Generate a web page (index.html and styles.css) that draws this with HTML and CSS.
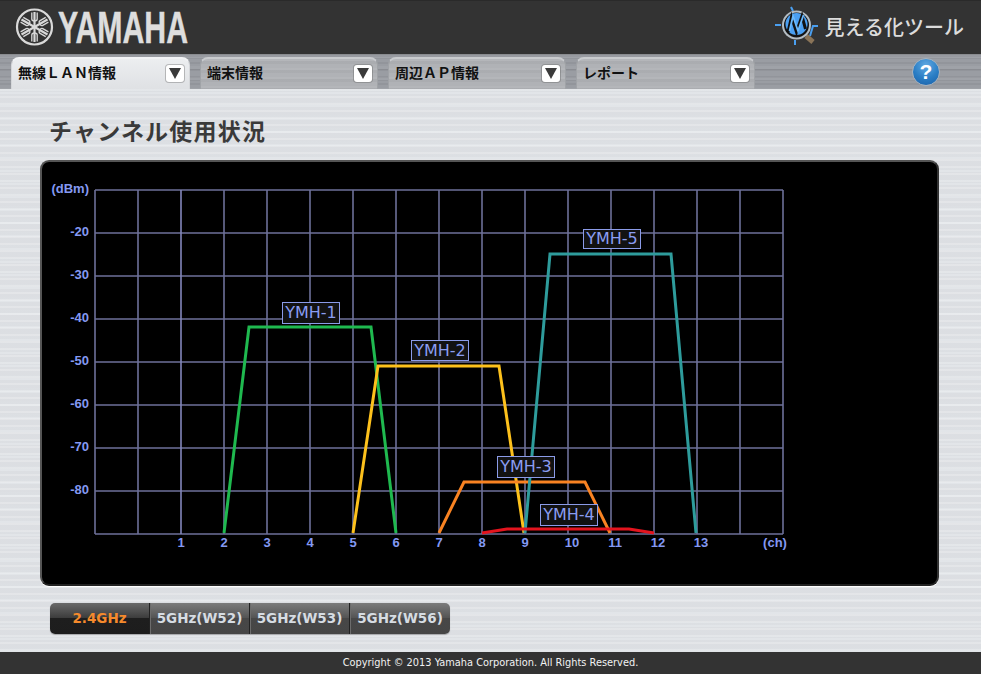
FILE: index.html
```html
<!DOCTYPE html>
<html lang="ja">
<head>
<meta charset="utf-8">
<title>チャンネル使用状況</title>
<link rel="stylesheet" href="styles.css">
</head>
<body>
<div class="page">
  <header class="header">
    <svg class="yamaha" viewBox="0 0 260 54" width="260" height="54" aria-label="YAMAHA">
      <g fill="none" stroke="#d9d9d9">
        <circle cx="34.500" cy="27" r="17.500" stroke-width="2.200"/>
        <g id="fork" stroke-width="1.300">
          <path d="M34.500 27V12" stroke-width="2.200"/>
          <path d="M31.800 12.500V19q0 2 2.700 2t2.700-2V12.500"/>
        </g>
        <g transform="rotate(60 34.500 27)"><use href="#fork"/></g>
        <g transform="rotate(120 34.500 27)"><use href="#fork"/></g>
        <g transform="rotate(180 34.500 27)"><use href="#fork"/></g>
        <g transform="rotate(240 34.500 27)"><use href="#fork"/></g>
        <g transform="rotate(300 34.500 27)"><use href="#fork"/></g>
      </g>
      <text class="yamaha-text" x="58" y="43" textLength="130" lengthAdjust="spacingAndGlyphs">YAMAHA</text>
    </svg>
    <div class="tool">
      <svg class="tool-icon" viewBox="772 4 46 46" width="46" height="46" aria-hidden="true">
        <path d="M773 25H779M808 36L811 26H816M789 7L791 11M793 40L793 45" stroke="#4a9ff0" stroke-width="2" fill="none"/>
        <path d="M804 36L811 42" stroke="#8a7458" stroke-width="5"/>
        <circle cx="794.500" cy="25" r="14.500" fill="#b4bdc4"/>
        <circle cx="794.500" cy="25" r="12.500" fill="#141414"/>
        <circle cx="794.500" cy="24" r="11" fill="#4a9ff2"/>
        <path d="M786 32L789.500 17L794.500 32L800 16L803.500 29" stroke="#111" stroke-width="3" fill="none"/>
        <path d="M787.500 31L791 16L796 31L801.500 15" stroke="#6ab8fb" stroke-width="1.800" fill="none"/>
      </svg>
      <span class="tool-name">見える化ツール</span>
    </div>
  </header>

  <nav class="nav">
    <div class="tab tab-active"><span class="tab-label">無線ＬＡＮ情報</span><span class="arrow"></span></div>
    <div class="tab"><span class="tab-label">端末情報</span><span class="arrow"></span></div>
    <div class="tab"><span class="tab-label">周辺ＡＰ情報</span><span class="arrow"></span></div>
    <div class="tab tab-wide"><span class="tab-label">レポート</span><span class="arrow"></span></div>
    <div class="help">?</div>
  </nav>

  <main class="main">
    <h1 class="title">チャンネル使用状況</h1>
    <section class="panel">
      <svg class="chart" viewBox="42 162 895 422" width="895" height="422">
        <path class="grid" d="M95 190V534M138 190V534M224 190V534M267 190V534M310 190V534M353 190V534M396 190V534M439 190V534M482 190V534M525 190V534M568 190V534M611 190V534M654 190V534M697 190V534M740 190V534M783 190V534"/>
        <path class="grid" d="M95 190H783M95 233H783M95 276H783M95 319H783M95 362H783M95 405H783M95 448H783M95 491H783M95 534H783"/>
        <path class="grid grid-hi" d="M181 190V534"/>

        <g class="axis-y">
          <text x="89" y="193">(dBm)</text>
          <text x="89" y="236">-20</text>
          <text x="89" y="279">-30</text>
          <text x="89" y="322">-40</text>
          <text x="89" y="365">-50</text>
          <text x="89" y="408">-60</text>
          <text x="89" y="451">-70</text>
          <text x="89" y="494">-80</text>
        </g>
        <g class="axis-x">
          <text x="181" y="547">1</text><text x="224" y="547">2</text><text x="267" y="547">3</text>
          <text x="310" y="547">4</text><text x="353" y="547">5</text><text x="396" y="547">6</text>
          <text x="439" y="547">7</text><text x="482" y="547">8</text><text x="525" y="547">9</text>
          <text x="572" y="547">10</text><text x="615" y="547">11</text><text x="658" y="547">12</text>
          <text x="701" y="547">13</text><text x="775" y="547">(ch)</text>
        </g>

        <polyline class="curve c1" points="224,533 249,327 371,327 396,533"/>
        <polyline class="curve c2" points="353,533 378,366 499,366 524,533"/>
        <polyline class="curve c3" points="439,533 464,482 585,482 610,533"/>
        <polyline class="curve c5" points="525,533 550,254 671,254 696,533"/>
        <polyline class="curve c4" points="482,533 507,529 629,529 654,533"/>

        <g class="ap">
          <rect x="282.500" y="302.500" width="57" height="21"/><text x="311" y="318">YMH-1</text>
          <rect x="411.500" y="340.500" width="57" height="20"/><text x="440" y="356">YMH-2</text>
          <rect x="497.500" y="456.500" width="57" height="21"/><text x="526" y="472">YMH-3</text>
          <rect x="540.500" y="504.500" width="57" height="21"/><text x="569" y="520">YMH-4</text>
          <rect x="583.500" y="229.500" width="57" height="19"/><text x="612" y="244">YMH-5</text>
        </g>
      </svg>
    </section>
    <div class="bands">
      <div class="band band-active">2.4GHz</div>
      <div class="band">5GHz(W52)</div>
      <div class="band">5GHz(W53)</div>
      <div class="band">5GHz(W56)</div>
    </div>
  </main>

  <footer class="footer">Copyright © 2013 Yamaha Corporation. All Rights Reserved.</footer>
</div>
</body>
</html>
```
FILE: styles.css
```css
* { box-sizing: border-box; }
html, body { margin: 0; height: 100%; overflow: hidden; }
body { font-family: "Noto Sans CJK JP", "Liberation Sans", sans-serif; }

.page { display: flex; flex-direction: column; width: 981px; height: 674px; }

/* header */
.header {
  flex: 0 0 54px;
  display: flex;
  align-items: center;
  justify-content: space-between;
  background: #333;
  border-top: 1px solid #2a2a2a;
  padding-right: 17px;
}
.yamaha { display: block; margin-top: -1px; }
.yamaha-text { font: 700 44px "Liberation Sans", sans-serif; fill: #dedede; stroke: #dedede; stroke-width: .5px; }
.tool { display: flex; align-items: center; gap: 5px; align-self: flex-start; margin-top: 3px; }
.tool-icon { display: block; }
.tool-name { font-size: 20px; line-height: 24px; font-weight: 500; color: #dcdcdc; margin-top: -1px; }

/* tab bar */
.nav {
  flex: 0 0 35px;
  display: flex;
  align-items: flex-end;
  gap: 10px;
  padding-left: 11px;
  position: relative;
  background:
    repeating-linear-gradient(180deg, rgba(255,255,255,.05) 0 3px, rgba(0,0,0,.05) 3px 4px, rgba(255,255,255,0) 4px 11px),
    repeating-linear-gradient(180deg, rgba(0,0,0,.05) 0 2px, rgba(0,0,0,0) 2px 7px),
    #9a9da3;
  border-top: 1px solid #8a8c90;
}
.tab {
  width: 178px;
  height: 32px;
  display: flex;
  align-items: center;
  justify-content: space-between;
  padding: 0 5px 4px 6px;
  border-radius: 8px 8px 0 0;
  border: 1px solid #a0a3a7;
  border-top: 2px solid #c9cbce;
  border-bottom: 0;
  background:
    repeating-linear-gradient(180deg, rgba(255,255,255,.05) 0 2px, rgba(0,0,0,.03) 2px 5px, rgba(255,255,255,0) 5px 9px),
    #b0b2b6;
}
.tab-wide { width: 179px; }
.tab-active {
  width: 179px;
  border-color: #d5d7da;
  border-top-color: #f2f3f5;
  background: linear-gradient(180deg, #eceef0, #dfe1e4);
}
.tab-label { font-size: 14px; line-height: 18px; font-weight: 700; color: #111; }
.arrow {
  width: 18px;
  height: 17px;
  margin-top: 2px;
  display: flex;
  align-items: center;
  justify-content: center;
  background: #fff;
  border-radius: 3px;
  box-shadow: 0 0 0 1px rgba(90,90,90,.35);
}
.arrow::after {
  content: "";
  border-left: 6px solid transparent;
  border-right: 6px solid transparent;
  border-top: 11px solid #3a3a3a;
}
.help {
  position: absolute;
  left: 912px;
  top: 3px;
  width: 28px;
  height: 28px;
  border-radius: 50%;
  border: 1px solid #a9b4bf;
  background: radial-gradient(circle at 50% 25%, #5fa9e2 0, #2a7dc4 55%, #1b5fa6 100%);
  color: #fff;
  font: 700 21px/26px "Liberation Sans", sans-serif;
  text-align: center;
}

/* content */
.main {
  flex: 1 1 auto;
  display: flex;
  flex-direction: column;
  padding: 0 42px 0 40px;
  background:
    repeating-linear-gradient(180deg, rgba(255,255,255,.22) 0 2px, rgba(255,255,255,0) 2px 7px),
    repeating-linear-gradient(180deg, rgba(0,0,0,.012) 0 3px, rgba(255,255,255,.1) 3px 5px, rgba(0,0,0,.015) 5px 13px),
    #dfe2e6;
}
.title {
  margin: 26px 0 0 9px;
  height: 45px;
  font-size: 23px;
  line-height: 30px;
  font-weight: 700;
  letter-spacing: 1.2px;
  color: #3a3a3a;
}
.panel {
  width: 899px;
  height: 426px;
  background: #000;
  border: 2px solid #555;
  border-bottom-color: #222;
  border-right-color: #333;
  border-radius: 9px;
  box-shadow: 0 1px 0 #fff;
  overflow: hidden;
}
.chart { display: block; }
.grid { fill: none; stroke: #6d7099; stroke-width: 1.6; }
.grid-hi { stroke: #8386bb; }
.axis-y text, .axis-x text { font: 700 13px "Liberation Sans", sans-serif; fill: #8499f2; }
.axis-y text { text-anchor: end; }
.axis-x text { text-anchor: middle; }
.curve { fill: none; stroke-width: 3; }
.c1 { stroke: #1fb94f; }
.c2 { stroke: #fdc11c; }
.c3 { stroke: #f98322; }
.c4 { stroke: #e3141e; }
.c5 { stroke: #2e9c9c; }
.ap rect { fill: #121212; stroke: #8b9be8; stroke-width: 1; }
.ap text { font: 16px "DejaVu Sans", sans-serif; fill: #8a9df0; text-anchor: middle; }

/* band switch */
.bands {
  display: flex;
  width: 400px;
  height: 31px;
  margin: 17px 0 0 10px;
  border-radius: 5px;
  overflow: hidden;
  box-shadow: 0 1px 1px rgba(0,0,0,.25);
}
.band {
  flex: 0 0 100px;
  text-align: center;
  font: 700 13.500px/30px "DejaVu Sans", sans-serif;
  color: #d6dce2;
  background: linear-gradient(180deg, #7c7c7c 0, #545454 48%, #474747 50%, #464646 100%);
  border-right: 1px solid #222;
  box-shadow: inset 1px 0 0 #6c6c6c;
}
.band:last-child { border-right: 0; }
.band-active {
  color: #f58a2c;
  box-shadow: none;
  background: linear-gradient(180deg, #6a6a6a 0, #3c3c3c 48%, #1e1e1e 50%, #1d1d1d 100%);
}

/* footer */
.footer {
  flex: 0 0 22px;
  background: #333;
  color: #f2f2f2;
  text-align: center;
  font: 9.800px/21px "DejaVu Sans", sans-serif;
}
```
